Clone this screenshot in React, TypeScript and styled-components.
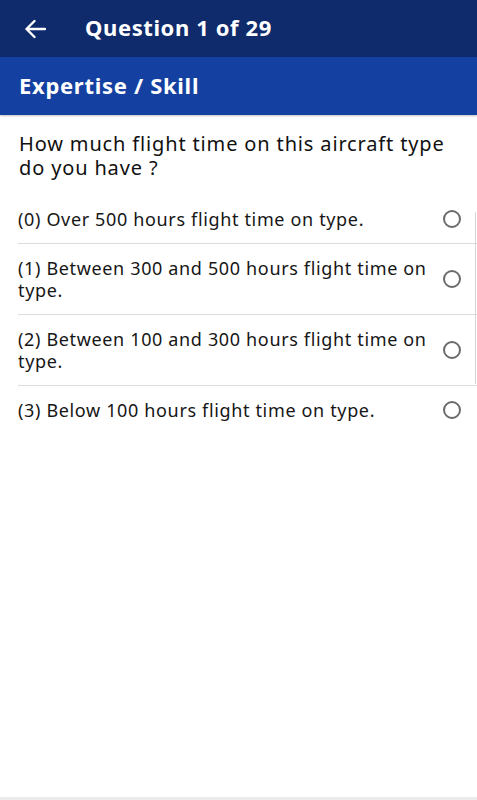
import styled, { createGlobalStyle } from 'styled-components';

const GlobalStyle = createGlobalStyle`
  html, body {
    margin: 0;
    padding: 0;
    background: #ffffff;
  }
  body {
    font-family: "Noto Sans", Roboto, "Liberation Sans", sans-serif;
    color: #1c1c1c;
  }
`;

const Screen = styled.div`
  width: 477px;
  height: 800px;
  display: flex;
  flex-direction: column;
  background: #ffffff;
  overflow: hidden;
`;

const AppBar = styled.header`
  height: 57px;
  flex-shrink: 0;
  display: flex;
  align-items: center;
  background-color: #0f2b6c;
  color: #ffffff;
`;

const BackButton = styled.button`
  width: 76px;
  height: 57px;
  padding: 0 0 0 24px;
  border: none;
  background: transparent;
  color: #ffffff;
  display: flex;
  align-items: center;
  cursor: pointer;
`;

const Title = styled.h1`
  margin: 0 0 3px 9px;
  font-size: 22px;
  font-weight: 700;
  letter-spacing: 0.6px;
`;

const SectionBar = styled.div`
  height: 58px;
  flex-shrink: 0;
  display: flex;
  align-items: center;
  box-sizing: border-box;
  padding: 0 19px 3px;
  background-color: #1441a1;
  color: #ffffff;
  font-size: 22px;
  font-weight: 700;
  letter-spacing: 0.7px;
  box-shadow: 0 1px 2px rgba(0, 0, 0, 0.25);
  position: relative;
  z-index: 1;
`;

const Body = styled.main`
  flex: 1;
  display: flex;
  flex-direction: column;
  padding-top: 17px;
`;

const Question = styled.p`
  margin: 0 0 15px;
  padding: 0 20px 0 19px;
  font-size: 20px;
  line-height: 24px;
  letter-spacing: 0.85px;
  color: #111111;
`;

const OptionList = styled.div`
  display: flex;
  flex-direction: column;
  position: relative;

  &::after {
    content: '';
    position: absolute;
    right: 1px;
    top: 17px;
    height: 172px;
    width: 1px;
    background: #d6d6d6;
  }
`;

const OptionRow = styled.label<{ $last?: boolean }>`
  display: flex;
  align-items: center;
  margin-left: 18px;
  padding: 13px 16px 13px 0;
  border-bottom: ${(p) => (p.$last ? 'none' : '1px solid #dcdcdc')};
  cursor: pointer;
`;

const OptionText = styled.span`
  flex: 1;
  font-size: 18px;
  line-height: 22px;
  letter-spacing: 0.65px;
  color: #161616;
  padding-right: 6px;
`;

const Radio = styled.span`
  width: 14px;
  height: 14px;
  border: 2px solid #6b6b6b;
  border-radius: 50%;
  flex-shrink: 0;
`;

const BottomEdge = styled.div`
  height: 3px;
  flex-shrink: 0;
  background: #ececec;
`;

const options = [
  '(0) Over 500 hours flight time on type.',
  '(1) Between 300 and 500 hours flight time on type.',
  '(2) Between 100 and 300 hours flight time on type.',
  '(3) Below 100 hours flight time on type.',
];

export default function App() {
  return (
    <>
      <GlobalStyle />
      <Screen>
        <AppBar>
          <BackButton aria-label="Back">
            <svg width="22" height="20" viewBox="0 0 22 20" fill="none">
              <path
                d="M21 10H2.5M10.5 2L2.5 10L10.5 18"
                stroke="#ffffff"
                strokeWidth="2.4"
                strokeLinecap="round"
                strokeLinejoin="round"
              />
            </svg>
          </BackButton>
          <Title>Question 1 of 29</Title>
        </AppBar>
        <SectionBar>Expertise / Skill</SectionBar>
        <Body>
          <Question>How much flight time on this aircraft type do you have ?</Question>
          <OptionList>
            {options.map((o, i) => (
              <OptionRow key={o} $last={i === options.length - 1}>
                <OptionText>{o}</OptionText>
                <Radio />
              </OptionRow>
            ))}
          </OptionList>
        </Body>
        <BottomEdge />
      </Screen>
    </>
  );
}
